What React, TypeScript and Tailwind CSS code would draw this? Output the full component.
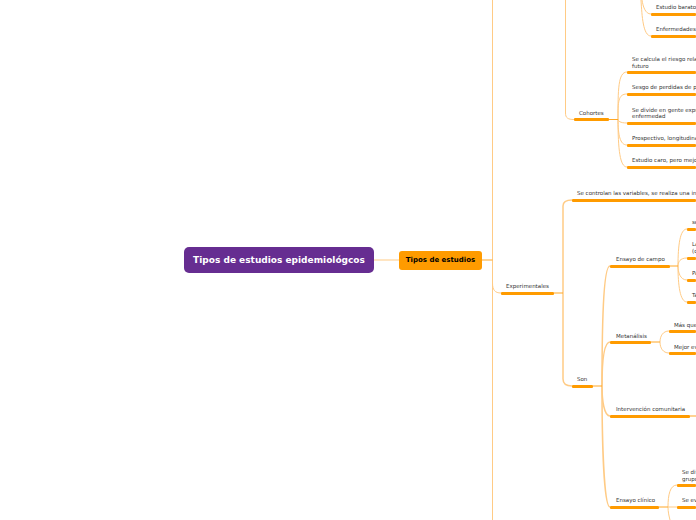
const branches = [
  // trunk and main branches
  { d: "M374 260H399", w: 1 },
  { d: "M492.5 0V520", w: 1 },
  { d: "M492.5 283C492.5 290 495 293 501 293", w: 1 },
  { d: "M565.5 0V113C565.5 118 568 119.5 574 119.5", w: 1 },
  { d: "M642 0C643 6 645 14 651 14", w: 1 },
  { d: "M641 0C642 16 643 36 651 36", w: 1 },
  // cohortes
  { d: "M618 119C618 90 618 72 627 72", w: 1 },
  { d: "M618 119C618 102 618 94 627 94", w: 1 },
  { d: "M618 119C618 121 620 123 627 123", w: 1 },
  { d: "M618 119C618 135 620 145 627 145", w: 1 },
  { d: "M618 119C618 150 620 167 627 167", w: 1 },
  // experimentales
  { d: "M563 293V206C563 202 566 200 572 200", w: 1.5 },
  { d: "M563 293V379C563 384 566 386 572 386", w: 1.5 },
  // son
  { d: "M602 386C602 330 603 266 610 266", w: 1.5 },
  { d: "M602 386C602 360 604 342 610 342", w: 1.5 },
  { d: "M602 386C602 400 604 416 610 416", w: 1.5 },
  { d: "M602 386C602 440 604 507 610 507", w: 1.5 },
  // ensayo de campo
  { d: "M678 266C678 245 680 229 687 229", w: 1 },
  { d: "M678 266C678 262 680 258 687 258", w: 1 },
  { d: "M678 266C678 272 680 280 687 280", w: 1 },
  { d: "M678 266C678 285 680 302 687 302", w: 1 },
  // metanalisis
  { d: "M660 342C660 336 663 331 669 331", w: 1 },
  { d: "M660 342C660 348 663 353 669 353", w: 1 },
  // ensayo clinico
  { d: "M668 507C668 495 670 485 677 485", w: 1 },
  { d: "M668 507H677", w: 1 },
  { d: "M668 507C668 512 669 516 670 520", w: 1 },
];

const links = [
  "M482 260H492.5",
  "M554 293H563",
  "M593 386H602",
  "M609 119.5H618",
  "M670 266H678",
  "M651 342H660",
  "M690 416H696",
  "M659 507H668",
];

const labels = [
  { x: 656, y: 7, lines: ["Estudio barato y rápido"] },
  { x: 656, y: 29, lines: ["Enfermedades raras"] },
  { x: 632, y: 59, lines: ["Se calcula el riesgo relativo a", "futuro"] },
  { x: 632, y: 87, lines: ["Sesgo de perdidas de pacientes"] },
  { x: 632, y: 109.5, lines: ["Se divide en gente expuesta a", "enfermedad"] },
  { x: 632, y: 138, lines: ["Prospectivo, longitudinal"] },
  { x: 632, y: 160, lines: ["Estudio caro, pero mejor"] },
  { x: 579, y: 113, lines: ["Cohortes"] },
  { x: 506, y: 286, lines: ["Experimentales"] },
  { x: 577, y: 193, lines: ["Se controlan las variables, se realiza una intervención"] },
  { x: 577, y: 379, lines: ["Son"] },
  { x: 616, y: 259, lines: ["Ensayo de campo"] },
  { x: 616, y: 336, lines: ["Metanálisis"] },
  { x: 616, y: 409, lines: ["Intervención comunitaria"] },
  { x: 616, y: 500, lines: ["Ensayo clínico"] },
  { x: 692, y: 222, lines: ["se"] },
  { x: 692, y: 244, lines: ["La", "(c"] },
  { x: 692, y: 273, lines: ["Pa"] },
  { x: 692, y: 295, lines: ["Ta"] },
  { x: 674, y: 325, lines: ["Más que"] },
  { x: 674, y: 347, lines: ["Mejor ev"] },
  { x: 682, y: 472, lines: ["Se div", "grupo"] },
  { x: 682, y: 500, lines: ["Se ev"] },
];

const bars = [
  [651, 14, 45], [651, 36, 45],
  [627, 72, 69], [627, 94, 69], [627, 123, 69], [627, 145, 69], [627, 167, 69],
  [574, 119.5, 35],
  [501, 293, 53], [572, 200, 124], [572, 386, 21],
  [610, 266, 60], [610, 342, 41], [610, 416, 80], [610, 507, 49],
  [687, 229, 9], [687, 258, 9], [687, 280, 9], [687, 302, 9],
  [669, 331, 27], [669, 353, 27],
  [677, 485, 19], [677, 507, 19],
];

export default function App() {
  return (
    <div className="relative w-[696px] h-[520px] overflow-hidden bg-white font-['DejaVu_Sans',sans-serif]">
      <svg className="absolute inset-0" width="696" height="520" fill="none">
        {branches.map((b, i) => (
          <path key={i} d={b.d} stroke="#ffcb85" strokeWidth={b.w} />
        ))}
        {links.map((d, i) => (
          <path key={i} d={d} stroke="#ffa726" strokeWidth="1" />
        ))}
      </svg>

      {bars.map(([x, y, w], i) => (
        <div
          key={i}
          className="absolute h-[3px] rounded-[1px] bg-[#ff9b00]"
          style={{ left: x, top: y - 1.5, width: w }}
        />
      ))}

      {labels.map((l, i) => (
        <div
          key={i}
          className="absolute whitespace-nowrap text-[5.5px] leading-[6.5px] text-[#333333]"
          style={{ left: l.x, top: l.y - 3 }}
        >
          {l.lines.map((t) => (
            <div key={t}>{t}</div>
          ))}
        </div>
      ))}

      <div className="absolute left-[184px] top-[247px] w-[190px] h-[26px] pt-[2px] flex items-center justify-center rounded-[5px] bg-[#662d91] text-white text-[9px] font-bold">
        Tipos de estudios epidemiológcos
      </div>
      <div className="absolute left-[399px] top-[251px] w-[83px] h-[19px] flex items-center justify-center rounded-[3px] bg-[#ff9b00] text-black text-[7px] font-bold">
        Tipos de estudios
      </div>
    </div>
  );
}
